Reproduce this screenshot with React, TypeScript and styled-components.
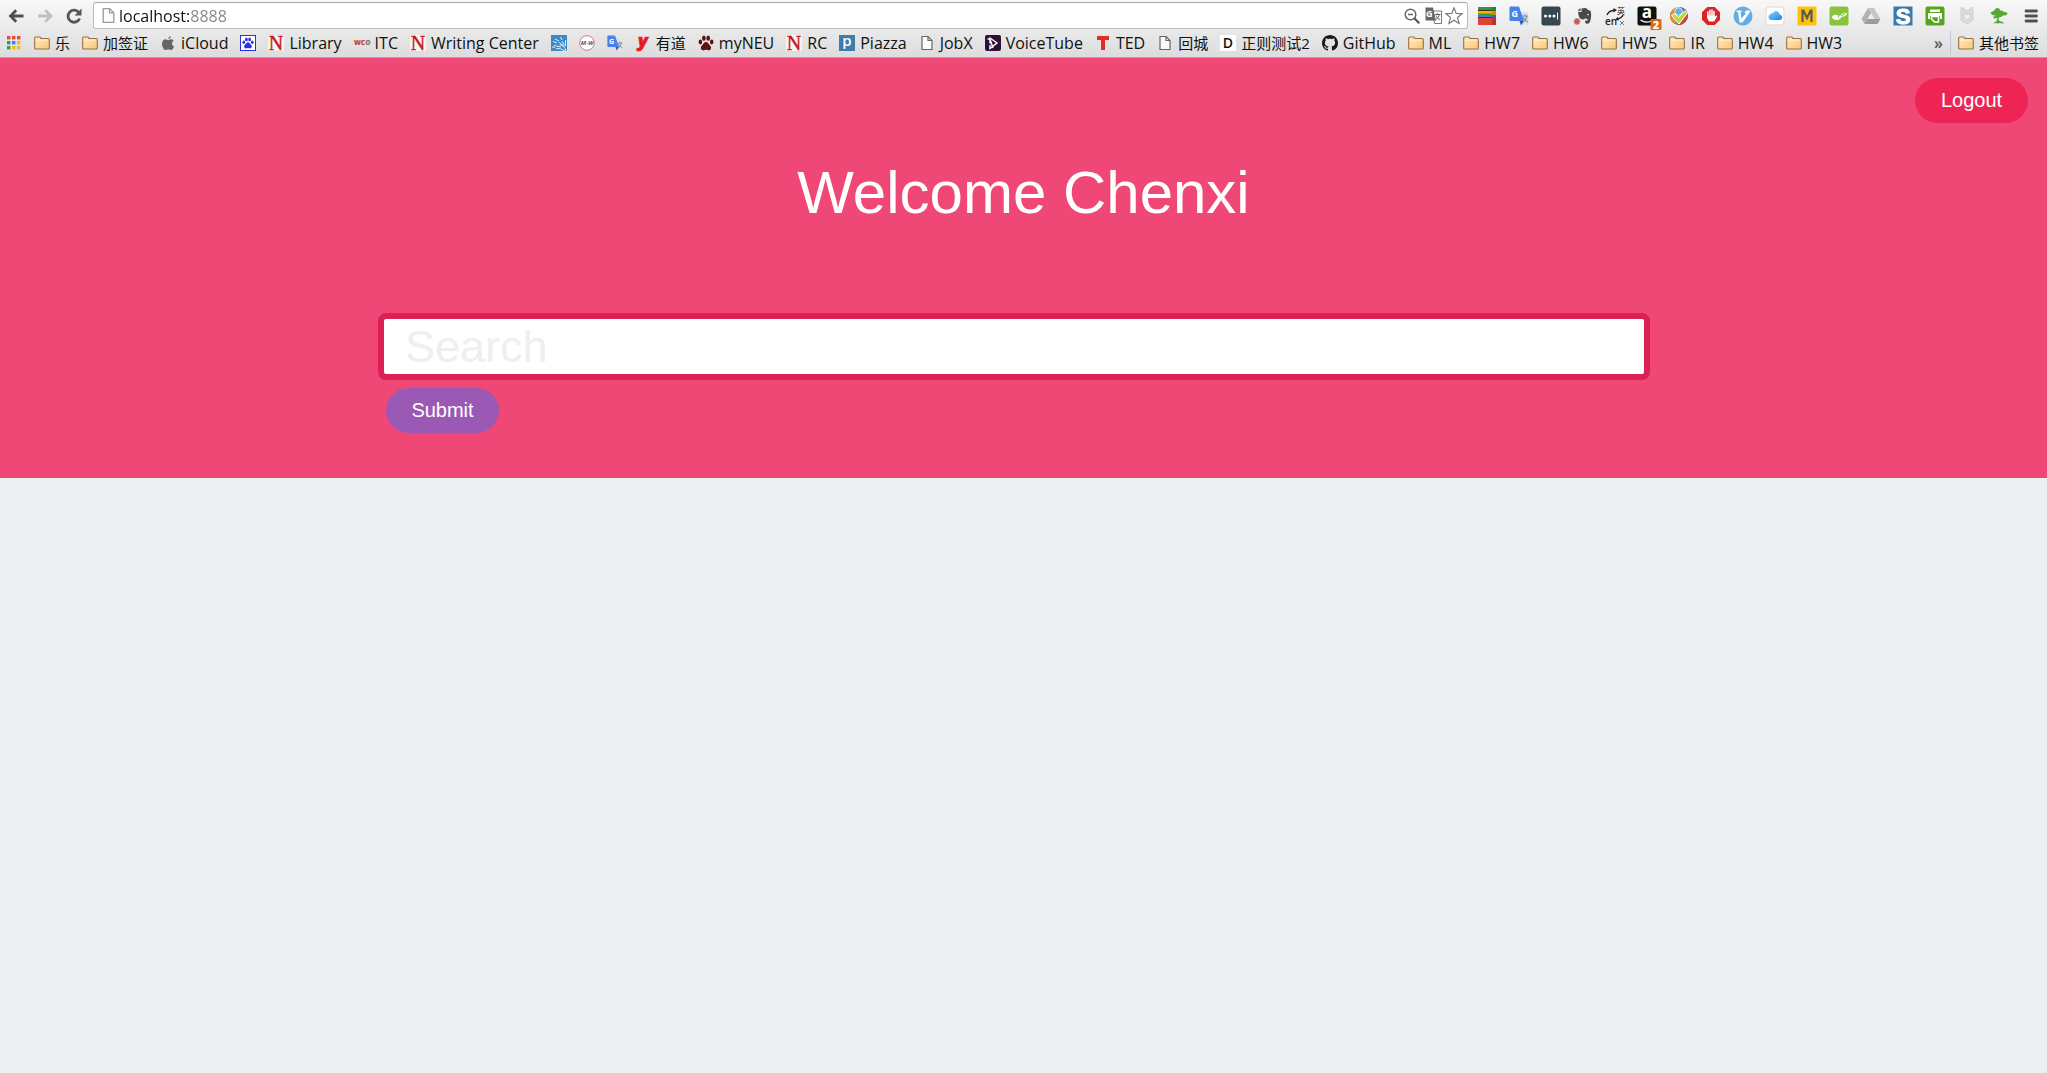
import React, { useState } from "react";
import styled, { createGlobalStyle } from "styled-components";

const GlobalStyle = createGlobalStyle`
  *, *::before, *::after { box-sizing: border-box; }
  body {
    margin: 0;
    background: #ecf0f1;
    font-family: "Liberation Sans", Arial, sans-serif;
  }
  button, input { font: inherit; }
`;

/* ---------- browser chrome ---------- */

const Chrome = styled.header`
  background: linear-gradient(#f8f8f8, #dcdcdc);
  border-bottom: 1px solid #a9a9a9;
  font-family: "Open Sans", "Noto Sans CJK SC", sans-serif;
  color: #111;
`;

const Toolbar = styled.div`
  display: flex;
  align-items: center;
  height: 30px;
  padding: 1px 6px 0 8px;
`;

const NavButtons = styled.div`
  display: flex;
  gap: 13px;
  margin-right: 11px;
`;

const IconButton = styled.button<{ $size: number }>`
  display: flex;
  align-items: center;
  justify-content: center;
  flex: none;
  width: ${(p) => p.$size}px;
  height: ${(p) => p.$size}px;
  padding: 0;
  border: 0;
  background: none;
  cursor: pointer;
`;

const Omnibox = styled.div`
  display: flex;
  align-items: center;
  flex: 1;
  min-width: 0;
  height: 27px;
  padding: 0 4px 0 6px;
  background: #fff;
  border: 1px solid #bdbdbd;
  border-top-color: #a8a8a8;
  border-radius: 3px;
`;

const Address = styled.input`
  flex: 1;
  min-width: 0;
  height: 24px;
  margin-left: 2px;
  padding: 0;
  border: 0;
  outline: 0;
  font-size: 16px;
  color: transparent;
  caret-color: #111;
  background: linear-gradient(90deg, #111 70px, #858585 70px);
  -webkit-background-clip: text;
  background-clip: text;
`;

const OmniboxActions = styled.div`
  display: flex;
  gap: 3px;
`;

const Extensions = styled.div`
  display: flex;
  gap: 12px;
  margin-left: 9px;
`;

const BookmarkBar = styled.nav`
  display: flex;
  align-items: center;
  height: 27px;
  padding: 0 8px 2px 6px;
  line-height: 24px;
`;

const BookmarkList = styled.div`
  display: flex;
  flex: 1;
  min-width: 0;
  gap: 12px;
  overflow: hidden;
`;

const Bookmark = styled.a`
  display: flex;
  align-items: center;
  flex: none;
  gap: 5px;
  color: inherit;
  text-decoration: none;
  white-space: nowrap;
`;

const BookmarkTitle = styled.span<{ $chinese?: boolean }>`
  font-size: ${(p) => (p.$chinese ? 15 : 16)}px;
`;

const Overflow = styled.button`
  padding: 0;
  border: 0;
  background: none;
  color: #555;
  font-size: 16px;
  font-weight: 600;
  line-height: 20px;
`;

const Divider = styled.span`
  width: 1px;
  height: 24px;
  margin: 0 7px;
  background: #c3cad4;
`;

/* ---------- page ---------- */

const Hero = styled.main`
  display: flex;
  flex-direction: column;
  padding: 20px 19px 45px;
  background: #ef4876;
`;

const PillButton = styled.button<{ $color: string }>`
  min-width: 113px;
  height: 45px;
  padding: 0 25px 2px;
  border: 0;
  border-radius: 23px;
  background: ${(p) => p.$color};
  color: #fff;
  font-size: 20px;
  line-height: 24px;
  cursor: pointer;
`;

const Account = styled.div`
  display: flex;
  justify-content: flex-end;
`;

const Title = styled.h1`
  margin: 36px 0 86px;
  color: #fff;
  font-size: 60px;
  font-weight: 400;
  line-height: 68px;
  text-align: center;
`;

const SearchForm = styled.form`
  width: 100%;
  max-width: 1291px;
  margin: 0 auto;
  padding-right: 19px;
`;

const SearchInput = styled.input`
  display: block;
  width: 100%;
  height: 67px;
  padding: 0 21px;
  border: 6px solid #d92156;
  border-radius: 8px;
  outline: 0;
  background: #fff;
  color: #34495e;
  font-size: 45px;
  &::placeholder { color: #ecf0f1; opacity: 1; }
`;

const SubmitRow = styled.div`
  padding: 8px 8px 0;
`;

/* ---------- icons ---------- */

const Drawing = styled.svg`
  display: block;
  flex: none;
  overflow: visible;
`;

const Svg = ({ size = 16, box, children }: { size?: number; box?: number; children: React.ReactNode }) => (
  <Drawing width={size} height={size} viewBox={`0 0 ${box ?? size} ${box ?? size}`} aria-hidden="true">
    {children}
  </Drawing>
);

const Back = () => (
  <Svg>
    <path d="M15.5 8H3M8.2 2.3 2.5 8l5.7 5.700" fill="none" stroke="#505050" strokeWidth="2.8" />
  </Svg>
);
const Forward = () => (
  <Svg>
    <path d="M1 8h12.5M8.300 2.300 14 8l-5.700 5.700" fill="none" stroke="#c0c0c0" strokeWidth="2.8" />
  </Svg>
);
const Reload = () => (
  <Svg>
    <path d="M13 4.800A6 6 0 1 0 13.600 10.500" fill="none" stroke="#555" strokeWidth="2.8" />
    <path d="M15.500.5v7H8.500z" fill="#555" />
  </Svg>
);
const Page = ({ size = 16, color = "#666" }) => (
  <Svg size={size} box={16}>
    <path d="M3 1.5h6L13 5.500v9H3z" fill="#fbfbfb" stroke={color} strokeWidth="1.2" />
    <path d="M9 1.5v4h4" fill="none" stroke={color} strokeWidth="1.2" />
  </Svg>
);
const Magnifier = () => (
  <Svg>
    <circle cx="6.5" cy="6.5" r="5.3" fill="#fff" stroke="#666" strokeWidth="1.5" />
    <path d="M4 6.5h5" stroke="#666" strokeWidth="1.5" />
    <path d="m10.300 10.300 5 5" stroke="#555" strokeWidth="2.2" />
  </Svg>
);
const TranslateMono = () => (
  <Svg size={17}>
    <path d="M7 4h9.500v12.500H9.500z" fill="#fff" stroke="#777" />
    <path d="M.5.5H8l3 13H.5z" fill="#666" />
    <text x="1" y="10" fontSize="9" fontWeight="700" fill="#fff" fontFamily="Open Sans">G</text>
    <path d="M10 7.500h5.500M12.700 6v1.500M14.500 7.500q-1 3.500-4 5.500M11 8.500q1 2.500 4 4.500" fill="none" stroke="#666" />
  </Svg>
);
const Star = () => (
  <Svg size={18}>
    <path d="m9 .8 2.200 5.600 6 .4-4.700 3.700 1.600 6L9 13.200l-5.100 3.300 1.600-6L.8 6.800l6-.4z" fill="#fff" stroke="#777" strokeWidth="1.1" />
  </Svg>
);

const Folder = () => (
  <Svg>
    <defs>
      <linearGradient id="folderFill" x1="0" y1="0" x2="1" y2="1">
        <stop offset="0" stopColor="#ffebc0" />
        <stop offset="1" stopColor="#fbc778" />
      </linearGradient>
    </defs>
    <path d="M.7 13V3q0-1 1-1h4q1 0 1.200 1.500h7.400q1 0 1 1V13q0 1-1 1H1.700q-1 0-1-1z" fill="url(#folderFill)" stroke="#98703f" strokeWidth="1.1" />
    <path d="M1.500 5.200h13" stroke="#fff3d6" strokeWidth=".8" />
  </Svg>
);
const appColors = ["#e8463a", "#e8463a", "#e8463a", "#2ba24c", "#3b83f6", "#f9bb11", "#2ba24c", "#f9bb11", "#f9bb11"];
const Apps = () => (
  <Svg>
    {appColors.map((c, i) => (
      <rect key={i} x={1 + (i % 3) * 5} y={1 + Math.floor(i / 3) * 5} width="3.4" height="3.4" fill={c} />
    ))}
  </Svg>
);
const Apple = () => (
  <Svg>
    <path d="M10.800.8q.2 2.400-2.500 3.500Q8.200 1.800 10.800.8zM8 5.100c1 0 1.600-.8 3-.8 1.200 0 2.200.7 2.700 1.400-2.500 1.500-2 4.900.4 5.800-.7 1.800-1.900 3.500-3 3.500-1 0-1.400-.6-2.700-.6s-1.800.6-2.700.6C3.900 15 2 11.600 2 8.900c0-2.900 1.700-4.600 3.500-4.600 1.200 0 1.800.8 2.500.8z" fill="#666" />
  </Svg>
);
const PawShape = ({ color }: { color: string }) => (
  <g fill={color}>
    <ellipse cx="2.4" cy="7" rx="1.8" ry="2.4" />
    <ellipse cx="5.900" cy="3.2" rx="1.8" ry="2.6" />
    <ellipse cx="10.200" cy="3.2" rx="1.8" ry="2.6" />
    <ellipse cx="13.700" cy="7" rx="1.8" ry="2.4" />
    <path d="M8 7c2 0 2.500 2.200 4 3.400 2 1.600 1.200 4.800-1.200 4.800-1.300 0-1.600-.5-2.800-.5s-1.500.5-2.800.5C2.800 15.200 2 12 4 10.400 5.500 9.200 6 7 8 7z" />
  </g>
);
const Paw = () => (
  <Svg>
    <PawShape color="#5c1212" />
  </Svg>
);
const Baidu = () => (
  <Svg>
    <rect x=".5" y=".5" width="15" height="15" fill="#fff" stroke="#2932e1" />
    <g transform="translate(2 2) scale(.75)">
      <PawShape color="#2932e1" />
    </g>
  </Svg>
);
const LetterN = () => (
  <Svg>
    <rect width="16" height="16" fill="#f8f4f3" />
    <text x="8" y="14.5" textAnchor="middle" fontSize="20" fill="#c41a1a" stroke="#c41a1a" strokeWidth=".4" fontFamily="Liberation Serif">N</text>
  </Svg>
);
const Wco = () => (
  <Svg>
    <text x="0" y="10" fontSize="6.600" fontWeight="800" fill="#c8373b" fontFamily="Open Sans">WC<tspan fill="#777">O</tspan></text>
  </Svg>
);
const Rays = () => (
  <Svg>
    <rect width="16" height="16" fill="#3c88c6" />
    <path d="M15 16Q14 11 8.500 9.500M14 16Q10 13 5 13.500M12.500 11 8 7M13.500 11 11 6M14.500 11V5M10 12 3 10.500M8 6 4 4M11 5 9.500 2M2 6.500l4 1.500M1 12l3 .3" fill="none" stroke="#e4f0f8" />
  </Svg>
);
const MerriamWebster = () => (
  <Svg>
    <circle cx="8" cy="8" r="7.3" fill="#fff" stroke="#d8797c" />
    <text x="8" y="10" textAnchor="middle" fontSize="6" fontWeight="700" fontStyle="italic" fill="#35618e" fontFamily="Open Sans">M-W</text>
  </Svg>
);
const GoogleTranslate = ({ size = 16 }) => (
  <Svg size={size} box={20}>
    <path d="M8 6h10.500q1 0 1 1v12.500H13z" fill="#dfe3e8" />
    <path d="M1.500.5H10L15 15H1.500q-1 0-1-1V1.500q0-1 1-1z" fill="#4a80ea" />
    <path d="M10.500 15H15l-3 4.500z" fill="#3059b5" />
    <text x="2.500" y="11" fontSize="9" fontWeight="700" fill="#fff" fontFamily="Open Sans">G</text>
    <path d="M13 10h6M16 8.500V10M18 10q-1 4-3.500 6M14 11q1.500 3.500 5 5" fill="none" stroke="#78909c" strokeWidth="1.200" />
  </Svg>
);
const Youdao = () => (
  <Svg>
    <text x="8" y="11.5" textAnchor="middle" fontSize="18" fontWeight="800" fontStyle="italic" fill="#e31c21" stroke="#e31c21" strokeWidth=".6" fontFamily="Open Sans">y</text>
  </Svg>
);
const Piazza = () => (
  <Svg>
    <rect width="16" height="16" fill="#3f7cac" />
    <text x="8" y="11" textAnchor="middle" fontSize="15" fontWeight="600" fill="#fff" fontFamily="Open Sans">p</text>
  </Svg>
);
const VoiceTube = () => (
  <Svg>
    <rect width="16" height="16" rx="2" fill="#2c1038" />
    <path d="M5 8.500V3l7 5-7 5.500V10M5.500 5.500 8 13M2.500 3.500 5 5" fill="none" stroke="#fff" strokeWidth="1.4" />
  </Svg>
);
const Ted = () => (
  <Svg>
    <path d="M2 1h12v4h-4v10H6V5H2z" fill="#e62b1e" />
  </Svg>
);
const LetterD = () => (
  <Svg>
    <rect width="16" height="16" fill="#fff" />
    <text x="8" y="13" textAnchor="middle" fontSize="14" fontWeight="600" fill="#111" fontFamily="Open Sans">D</text>
  </Svg>
);
const GitHub = () => (
  <Svg>
    <path fill="#1b1817" d="M8 0C3.580 0 0 3.580 0 8c0 3.540 2.290 6.530 5.470 7.590.4.070.55-.17.55-.38 0-.19-.01-.82-.01-1.490-2.010.37-2.530-.49-2.690-.94-.09-.23-.48-.94-.82-1.130-.28-.15-.68-.52-.01-.53.63-.01 1.080.58 1.230.82.72 1.210 1.870.87 2.330.66.07-.52.28-.87.51-1.070-1.780-.2-3.640-.89-3.640-3.950 0-.87.31-1.590.82-2.150-.08-.2-.36-1.020.08-2.120 0 0 .67-.21 2.200.82.64-.18 1.320-.27 2-.27s1.360.09 2 .27c1.530-1.040 2.200-.82 2.200-.82.44 1.100.16 1.920.08 2.120.51.56.82 1.270.82 2.150 0 3.070-1.870 3.750-3.650 3.950.29.25.54.73.54 1.480 0 1.070-.01 1.930-.01 2.200 0 .21.15.46.55.38A8.010 8.010 0 0 0 16 8c0-4.420-3.580-8-8-8z" />
  </Svg>
);

const Tile = ({ children }: { children: React.ReactNode }) => <Svg size={20}>{children}</Svg>;

const extensions: { name: string; icon: React.ReactNode }[] = [
  {
    name: "Reader",
    icon: (
      <Tile>
        <path d="M1 1h18v5H1z" fill="#31954b" />
        <path d="M1 5h18v4H1z" fill="#f5b400" />
        <path d="M1 9h18v4H1z" fill="#3f7de0" />
        <path d="M1 7.500h14v2H1z" fill="#2f9b4a" />
        <path d="M1 12h18v7H1z" fill="#dc4437" />
        <path d="M1 4.500h14M1 11.500h14" stroke="#4b2a12" />
        <path d="M15 1h4v18h-4z" fill="#000" opacity=".18" />
      </Tile>
    ),
  },
  { name: "Translate", icon: <GoogleTranslate size={20} /> },
  {
    name: "Passwords",
    icon: (
      <Tile>
        <rect x=".5" y=".5" width="19" height="19" rx="2" fill="#37474f" />
        <circle cx="4.5" cy="10" r="1.5" fill="#fff" />
        <circle cx="8.800" cy="10" r="1.5" fill="#fff" />
        <circle cx="13" cy="10" r="1.5" fill="#fff" />
        <path d="M16.500 6.500v7" stroke="#fff" />
      </Tile>
    ),
  },
  {
    name: "Clipper",
    icon: (
      <Tile>
        <path d="M5 6h3.500V2.500Q14 1 15 4l2.500.7Q19 9 17 16q-1.500 2.500-4 1.500-1.500-1-.8-3l2.300.2V13Q12 11.800 11 13.300 6 15 5 6z" fill="#4a4a4a" />
        <path d="M4.500 5 7.500 2v3z" fill="#4a4a4a" />
        <path d="M14 9q1-1.500 2 0" stroke="#ddd" fill="none" />
        <circle cx="4" cy="15.5" r="3" fill="#e0503c" stroke="#a5a5a5" />
      </Tile>
    ),
  },
  {
    name: "Dictionary",
    icon: (
      <Tile>
        <text x="0" y="19" fontSize="10" fontWeight="600" fill="#222" fontFamily="Open Sans">en</text>
        <text x="12" y="8" fontSize="8" fill="#222" fontFamily="Noto Sans CJK SC">英</text>
        <path d="M2 9Q4 4.500 9 4.500M12 13q5-1 6-4" stroke="#222" strokeWidth="1.4" fill="none" />
        <path d="m8.500 2 3.500 2-3.500 2.500zM12.500 11 10 14l4 .5z" fill="#222" />
        <path d="m15 15 4 4M19 15l-4 4" stroke="#777" />
      </Tile>
    ),
  },
  {
    name: "Amazon",
    icon: (
      <Tile>
        <rect x=".5" y=".5" width="19" height="19" rx="2" fill="#111" />
        <text x="10" y="12" textAnchor="middle" fontSize="17" fontWeight="700" fill="#fff" fontFamily="Open Sans">a</text>
        <path d="M3.500 14q6 4 12 .5" stroke="#fff" strokeWidth="1.4" fill="none" />
        <rect x="13.5" y="13" width="11" height="11" rx="1.5" fill="#d96a12" />
        <text x="19" y="22.5" textAnchor="middle" fontSize="11" fontWeight="800" fill="#fff" fontFamily="Open Sans">2</text>
      </Tile>
    ),
  },
  {
    name: "Checker",
    icon: (
      <Tile>
        <circle cx="10" cy="10" r="9" fill="#3d8fd0" />
        <path d="M1 10a9 9 0 0 1 5-8l4 8-4 8q-5-2-5-8z" fill="#f08a24" />
        <path d="M14 2a9 9 0 0 1 5 8q-1 6-7 9H8z" fill="#d24a32" />
        <path d="M11 1q6 1 7.500 6L14 5z" fill="#3d7fc8" />
        <circle cx="9.5" cy="5.5" r="3.8" fill="#5eb3ea" stroke="#d9effb" />
        <path d="m2.500 9.500 3-2L9.500 11.500l6.500-7 2.500 2.500L10 18z" fill="#bcd64a" stroke="#fff" />
      </Tile>
    ),
  },
  {
    name: "Blocker",
    icon: (
      <Tile>
        <path d="M6.300 1h7.400L19 6.300v7.400L13.700 19H6.300L1 13.700V6.300z" fill="#dd2222" />
        <path d="M6.900 11.500V6M8.900 10V4.200M11 10V4M13 10.500V5.500" stroke="#fff" strokeWidth="1.5" strokeLinecap="round" />
        <path d="M6.200 9.500h7.500v1.500l1.500-1.500q1.300 0 .8 1.200L13.200 15.500H8q-1.800-2-1.800-6z" fill="#fff" />
      </Tile>
    ),
  },
  {
    name: "Vim",
    icon: (
      <Tile>
        <circle cx="10" cy="10" r="9.5" fill="#62aee4" />
        <path d="M3.500 4.500h5V6h-1l1 6.500L13 7.500l-1.500-1L13 4.500h4V6L9.500 16.500h-3L5 6H3.500z" fill="#fff" />
        <path d="M9.500 8 13 3.500" stroke="#62aee4" />
      </Tile>
    ),
  },
  {
    name: "iCloud",
    icon: (
      <Tile>
        <defs>
          <linearGradient id="cloudFill" x1="0" y1="0" x2="1" y2="1">
            <stop offset="0" stopColor="#86dcfb" />
            <stop offset="1" stopColor="#1f78e8" />
          </linearGradient>
        </defs>
        <rect x="1" y="1" width="18" height="18" rx="3" fill="#fff" stroke="#d9d9d9" />
        <path d="M5.500 14a3.200 3.200 0 0 1 0-6Q6 6.500 8 7q1.500-2.500 4-1.800 2.500.8 2.600 3.200Q17.500 9 17.300 11.500 17 14 14.500 14z" fill="url(#cloudFill)" />
      </Tile>
    ),
  },
  {
    name: "Mail",
    icon: (
      <Tile>
        <rect x=".5" y=".5" width="19" height="19" rx="1" fill="#fdc20c" />
        <path d="M5.500 16V4.500h1L10 12l3.500-7.500h1V16" fill="none" stroke="#5a5a5a" strokeWidth="2.200" />
      </Tile>
    ),
  },
  {
    name: "Seeds",
    icon: (
      <Tile>
        <rect x=".5" y=".5" width="19" height="19" rx="2" fill="#8ac43f" />
        <path d="M2.500 11q2-3 6-2l2.500 1Q13 6.500 18 7q-.5 3.500-5.500 4-1.500 3-4.500 3-4 0-5.500-3z" fill="#fff" />
        <path d="m12 10 4-2M9 9l1 3" stroke="#8ac43f" />
      </Tile>
    ),
  },
  {
    name: "Drive",
    icon: (
      <Tile>
        <path d="M7 2h6l6.500 11h-6z" fill="#c6c6c6" />
        <path d="M7 2 .5 13l3 5 6.500-11z" fill="#b2b2b2" />
        <path d="M6.500 13h13l-3 5h-13z" fill="#9c9c9c" />
      </Tile>
    ),
  },
  {
    name: "Stylish",
    icon: (
      <Tile>
        <rect x=".5" y=".5" width="19" height="19" fill="#3a79ab" />
        <text x="10" y="17.5" textAnchor="middle" fontSize="22" fontWeight="700" fill="#fff" stroke="#fff" fontFamily="Liberation Sans">S</text>
      </Tile>
    ),
  },
  {
    name: "Print",
    icon: (
      <Tile>
        <rect x=".5" y=".5" width="19" height="19" rx="2" fill="#56a51c" />
        <path d="M5 3.500h10V6H5zM3 7h14v6h-2v-3H5v3H3z" fill="#fff" />
        <path d="M6.500 10.500h7V16H9.500l-3-3z" fill="#56a51c" stroke="#fff" strokeWidth="1.4" />
      </Tile>
    ),
  },
  {
    name: "Shield",
    icon: (
      <Tile>
        <path d="m4 1 6 4 6-4v13l-6 4-6-4zM7 7v5l3 2 3-2V7l-3 2z" fill="#dcdcdc" stroke="#c4c4c4" strokeWidth=".7" fillRule="evenodd" />
      </Tile>
    ),
  },
  {
    name: "Tree",
    icon: (
      <Tile>
        <path d="M1.500 7q1-2 3.500-2 .5-2.500 3-3 3 0 3 2.500 3-.5 4 1.500 3.500-.5 3.500 2-1.500 2-5 1.500-1 2-3.500 2l-.5 2.500q1 1.500 4.500 2l1 1.500-5-.5-1.500 1-.5-1-4 .5L7.500 15l1-3-3.500.5-1-1.500 3-1.500Q3 10 1.500 7z" fill="#57a835" />
      </Tile>
    ),
  },
  {
    name: "Menu",
    icon: (
      <Tile>
        <path d="M5 5h10.500M5 10h10.500M5 15h10.500" stroke="#505050" strokeWidth="2.8" strokeLinecap="round" />
      </Tile>
    ),
  },
];

type BookmarkEntry = { icon: React.ReactNode; label: string; iconOnly?: boolean; chinese?: boolean };

const bookmarks: BookmarkEntry[] = [
  { icon: <Apps />, label: "Apps", iconOnly: true },
  { icon: <Folder />, label: "乐", chinese: true },
  { icon: <Folder />, label: "加签证", chinese: true },
  { icon: <Apple />, label: "iCloud" },
  { icon: <Baidu />, label: "Baidu", iconOnly: true },
  { icon: <LetterN />, label: "Library" },
  { icon: <Wco />, label: "ITC" },
  { icon: <LetterN />, label: "Writing Center" },
  { icon: <Rays />, label: "Rays", iconOnly: true },
  { icon: <MerriamWebster />, label: "Merriam-Webster", iconOnly: true },
  { icon: <GoogleTranslate />, label: "Translate", iconOnly: true },
  { icon: <Youdao />, label: "有道", chinese: true },
  { icon: <Paw />, label: "myNEU" },
  { icon: <LetterN />, label: "RC" },
  { icon: <Piazza />, label: "Piazza" },
  { icon: <Page />, label: "JobX" },
  { icon: <VoiceTube />, label: "VoiceTube" },
  { icon: <Ted />, label: "TED" },
  { icon: <Page />, label: "回城", chinese: true },
  { icon: <LetterD />, label: "正则测试2", chinese: true },
  { icon: <GitHub />, label: "GitHub" },
  ...["ML", "HW7", "HW6", "HW5", "IR", "HW4", "HW3"].map((label) => ({ icon: <Folder />, label })),
];

export default function App() {
  const [url, setUrl] = useState("localhost:8888");
  const [query, setQuery] = useState("");

  return (
    <>
      <GlobalStyle />
      <Chrome>
        <Toolbar>
          <NavButtons>
            <IconButton $size={16} aria-label="Back"><Back /></IconButton>
            <IconButton $size={16} aria-label="Forward"><Forward /></IconButton>
            <IconButton $size={16} aria-label="Reload"><Reload /></IconButton>
          </NavButtons>
          <Omnibox>
            <Page size={17} color="#999" />
            <Address aria-label="Address" value={url} onChange={(e) => setUrl(e.target.value)} spellCheck={false} />
            <OmniboxActions>
              <IconButton $size={18} aria-label="Zoom"><Magnifier /></IconButton>
              <IconButton $size={18} aria-label="Translate page"><TranslateMono /></IconButton>
              <IconButton $size={18} aria-label="Bookmark"><Star /></IconButton>
            </OmniboxActions>
          </Omnibox>
          <Extensions>
            {extensions.map((x) => (
              <IconButton key={x.name} $size={20} aria-label={x.name}>{x.icon}</IconButton>
            ))}
          </Extensions>
        </Toolbar>
        <BookmarkBar aria-label="Bookmarks">
          <BookmarkList>
            {bookmarks.map((b) => (
              <Bookmark key={b.label} href="#" aria-label={b.label}>
                {b.icon}
                {!b.iconOnly && <BookmarkTitle $chinese={b.chinese}>{b.label}</BookmarkTitle>}
              </Bookmark>
            ))}
          </BookmarkList>
          <Overflow aria-label="More bookmarks">»</Overflow>
          <Divider />
          <Bookmark href="#">
            <Folder />
            <BookmarkTitle $chinese>其他书签</BookmarkTitle>
          </Bookmark>
        </BookmarkBar>
      </Chrome>
      <Hero>
        <Account>
          <PillButton type="button" $color="#ee2455">Logout</PillButton>
        </Account>
        <Title>Welcome Chenxi</Title>
        <SearchForm onSubmit={(e) => e.preventDefault()}>
          <SearchInput
            type="text"
            aria-label="Search"
            placeholder="Search"
            value={query}
            onChange={(e) => setQuery(e.target.value)}
          />
          <SubmitRow>
            <PillButton type="submit" $color="#9b59b6">Submit</PillButton>
          </SubmitRow>
        </SearchForm>
      </Hero>
    </>
  );
}
